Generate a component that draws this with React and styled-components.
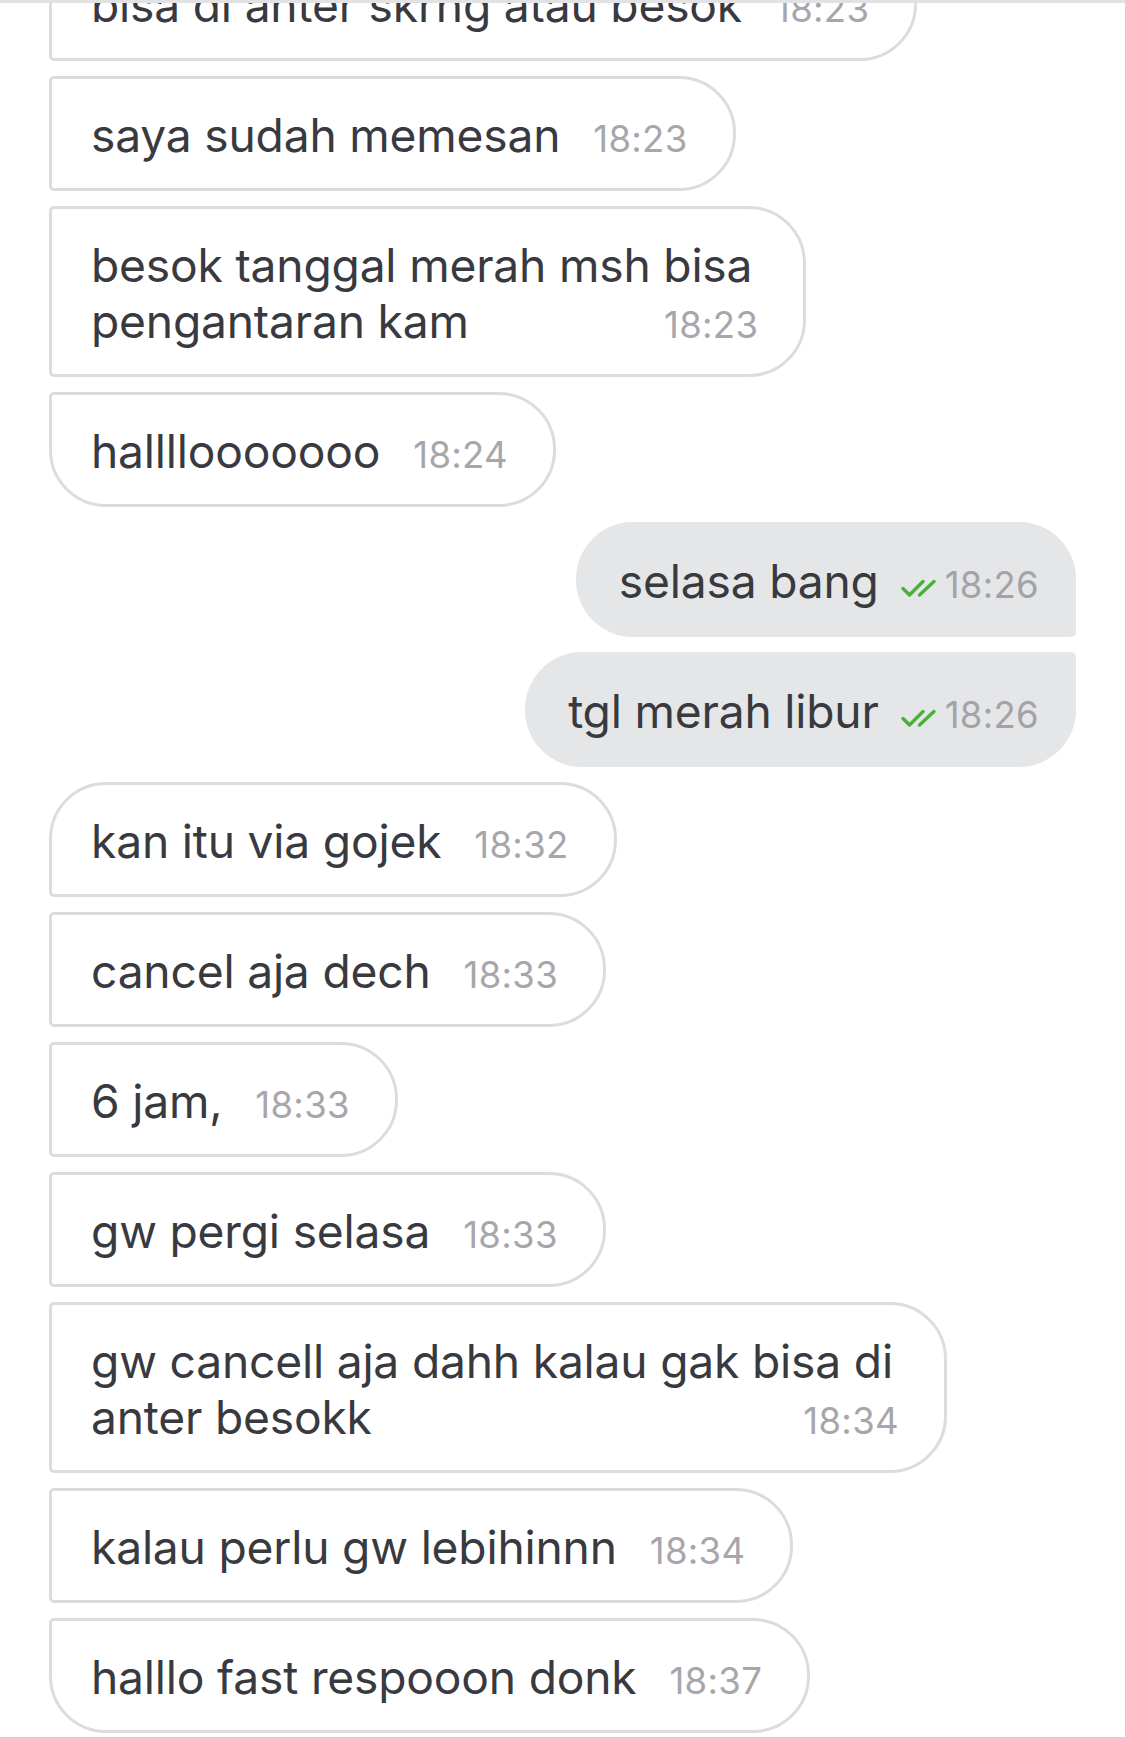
import React from "react";
import styled, { createGlobalStyle, css } from "styled-components";

const Global = createGlobalStyle`
  html, body { margin: 0; padding: 0; background: #ffffff; }
  body { overflow: hidden; font-family: Inter, "Noto Sans", "Liberation Sans", sans-serif; }
`;

const Screen = styled.div`
  width: 1125px;
  height: 1737px;
  overflow: hidden;
  position: relative;
  background: #ffffff;
`;

const TopBand = styled.div`
  position: absolute;
  top: 0;
  left: 0;
  right: 0;
  height: 3px;
  background: #e2e2e4;
  z-index: 2;
`;

const Thread = styled.div`
  display: flex;
  flex-direction: column;
  gap: 15px;
  padding: 0 49px;
  margin-top: -54px;
`;

const BIG = 57;
const SMALL = 5;

const Bubble = styled.div`
  box-sizing: border-box;
  display: inline-flex;
  flex-direction: column;
  max-width: 920px;
  padding: 28px 45px 25px 39px;
  color: #393a3f;
  font-size: 46.2px;
  line-height: 56px;
  letter-spacing: -0.2px;
  ${(p) =>
    p.$out
      ? css`
          align-self: flex-end;
          background: #e5e6e8;
          padding: 31px 37px 28px 43px;
          border-radius: ${BIG}px ${p.$tr ? BIG : SMALL}px
            ${p.$br ? BIG : SMALL}px ${BIG}px;
        `
      : css`
          align-self: flex-start;
          background: #ffffff;
          border: 3px solid #dcdce0;
          border-radius: ${p.$tl ? BIG : SMALL}px ${BIG}px ${BIG}px
            ${p.$bl ? BIG : SMALL}px;
        `}
`;

const Line = styled.div`
  white-space: nowrap;
  padding-right: 6px;
`;

const LastLine = styled.div`
  display: flex;
  align-items: baseline;
  justify-content: space-between;
  white-space: nowrap;
  height: 56px;
`;

const Time = styled.span`
  margin-left: 33px;
  font-size: 36.5px;
  line-height: 1;
  color: #a7a7ab;
  letter-spacing: 0.3px;
  display: inline-flex;
  align-items: baseline;
`;

const OutTime = styled(Time)`
  margin-left: 22px;
  color: #a3a3a7;
`;

const Check = styled.svg`
  width: 36px;
  height: 20px;
  margin-right: 8px;
  align-self: center;
  position: relative;
  top: 3px;
`;

const DoubleCheck = () => (
  <Check viewBox="0 0 36 20" fill="none">
    <path
      d="M2 10.5 L8.5 17 L22 3.5"
      stroke="#4caf3c"
      strokeWidth="3.4"
      strokeLinecap="round"
      strokeLinejoin="round"
    />
    <path
      d="M18.5 17 L33 3.5"
      stroke="#4caf3c"
      strokeWidth="3.4"
      strokeLinecap="round"
    />
  </Check>
);

const messages = [
  { lines: ["bisa di anter skrng atau besok"], time: "18:23" },
  { lines: ["saya sudah memesan"], time: "18:23" },
  { lines: ["besok tanggal merah msh bisa", "pengantaran kam"], time: "18:23" },
  { lines: ["hallllooooooo"], time: "18:24", bl: true },
  { lines: ["selasa bang"], time: "18:26", out: true, tr: true },
  { lines: ["tgl merah libur"], time: "18:26", out: true, br: true },
  { lines: ["kan itu via gojek"], time: "18:32", tl: true },
  { lines: ["cancel aja dech"], time: "18:33" },
  { lines: ["6 jam,"], time: "18:33" },
  { lines: ["gw pergi selasa"], time: "18:33" },
  { lines: ["gw cancell aja dahh kalau gak bisa di", "anter besokk"], time: "18:34" },
  { lines: ["kalau perlu gw lebihinnn"], time: "18:34" },
  { lines: ["halllo fast respooon donk"], time: "18:37", bl: true },
];

const Message = ({ m }) => {
  const head = m.lines.slice(0, -1);
  const last = m.lines[m.lines.length - 1];
  return (
    <Bubble $out={m.out} $tl={m.tl} $bl={m.bl} $tr={m.tr} $br={m.br}>
      {head.map((l, i) => (
        <Line key={i}>{l}</Line>
      ))}
      <LastLine>
        <span>{last}</span>
        {m.out ? (
          <OutTime>
            <DoubleCheck />
            {m.time}
          </OutTime>
        ) : (
          <Time>{m.time}</Time>
        )}
      </LastLine>
    </Bubble>
  );
};

export default function App() {
  return (
    <Screen>
      <Global />
      <TopBand />
      <Thread>
        {messages.map((m, i) => (
          <Message key={i} m={m} />
        ))}
      </Thread>
    </Screen>
  );
}
